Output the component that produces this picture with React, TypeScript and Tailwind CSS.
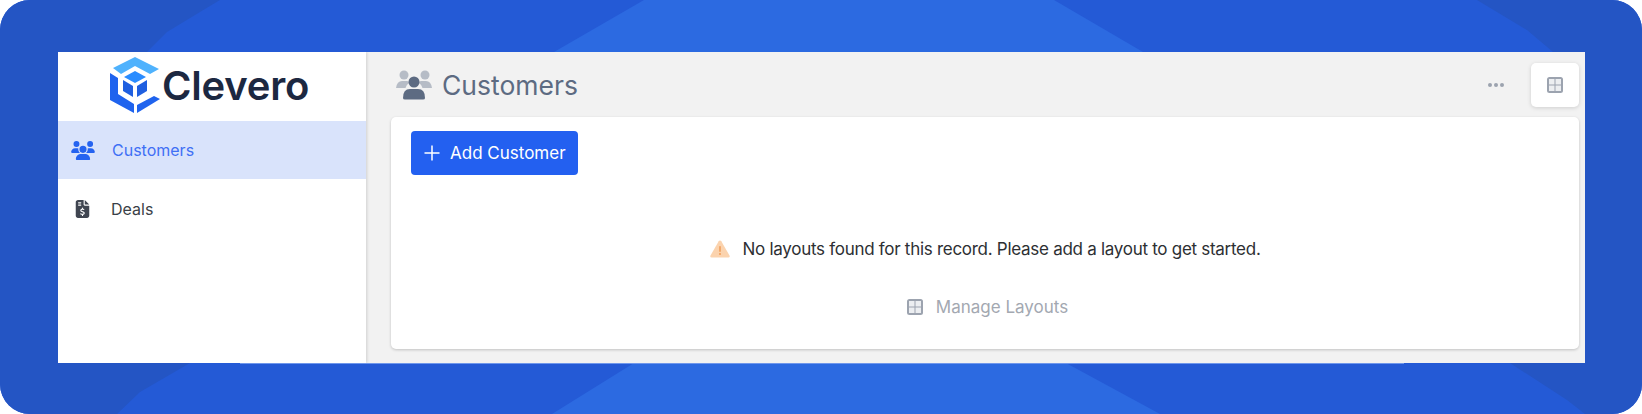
import { FaUsers, FaFileInvoiceDollar } from "react-icons/fa6";

function Backdrop() {
  return (
    <svg className="absolute inset-0" width="1642" height="414" viewBox="0 0 1642 414">
      <polygon points="644,0 1054,0 1143,52 554,52" fill="#2c6ae1" />
      <polygon points="634,363 1066,363 1160,414 552,414" fill="#2c6ae1" />
      <path d="M0 0 H220 L200 12 L167 32 L147 52 H58 V363 H190 L140 392 L117 414 H0 Z" fill="#2455c4" />
      <path d="M1642 0 H1477 L1527 30 L1553 52 H1585 V363 H1510 L1567 400 L1585 414 H1642 Z" fill="#2455c4" />
      <rect x="240" y="363" width="1164" height="1" fill="#6f97ec" />
    </svg>
  );
}

function Logo() {
  return (
    <svg width="54" height="60" viewBox="107 55 54 60" className="shrink-0 mb-[4px]">
      <polygon points="134,57 112,68 120,74 134,66 149,74 158,69" fill="#4fb2fd" />
      <polygon points="109,73 109,100 133,113 133,104 117,94 117,78" fill="#1f63ee" />
      <polygon points="136,113 159,99 153,96 136,105" fill="#1f63ee" />
      <polygon points="134,71 145,77 134,83 123,77" fill="#2a8cff" />
      <polygon points="122,80 132,86 132,97 122,91" fill="#1f5fe0" />
      <polygon points="136,86 146,80 146,91 136,97" fill="#1f5fe0" />
    </svg>
  );
}

function GridIcon({ className }: { className: string }) {
  return (
    <svg viewBox="0 0 18 18" className={className}>
      <rect x="1" y="1" width="16" height="16" rx="2.5" fill="#9ca3af" />
      <rect x="3" y="3" width="5.5" height="5.5" fill="#eceef1" />
      <rect x="9.5" y="3" width="5.5" height="5.5" fill="#eceef1" />
      <rect x="3" y="9.5" width="5.5" height="5.5" fill="#eceef1" />
      <rect x="9.5" y="9.5" width="5.5" height="5.5" fill="#eceef1" />
    </svg>
  );
}

function PeopleDuo() {
  return (
    <svg width="36" height="30" viewBox="0 0 36 30" className="shrink-0">
      <g fill="#b6bcc6">
        <circle cx="8" cy="5" r="4.5" />
        <circle cx="29" cy="5" r="4.5" />
        <path d="M0 18 Q1 11 6 11 H11 Q13 11 13 13 Q10 15 9.5 18 Z" />
        <path d="M36 18 Q35 11 30 11 H25 Q23 11 23 13 Q26 15 26.5 18 Z" />
      </g>
      <g fill="#5d6b82">
        <circle cx="18" cy="12" r="5.5" />
        <path d="M7 28 Q7 19 14 19 H22 Q29 19 29 28 Q29 29.500 27 29.500 H9 Q7 29.500 7 28 Z" />
      </g>
    </svg>
  );
}

function Warning() {
  return (
    <svg width="20" height="18" viewBox="0 0 20 18" className="shrink-0">
      <path d="M10 0.500 Q10.800 0.500 11.300 1.300 L19.500 15.500 Q20.300 17.500 18.300 17.500 H1.700 Q-0.300 17.500 0.500 15.500 L8.700 1.300 Q9.200 0.500 10 0.500 Z" fill="#fbd3ae" />
      <rect x="9.300" y="6" width="1.400" height="6" rx="0.700" fill="#f0974f" />
      <circle cx="10" cy="14" r="0.900" fill="#f0974f" />
    </svg>
  );
}

export default function App() {
  return (
    <div className="w-[1642px] h-[414px] bg-white overflow-hidden font-['Inter',sans-serif]">
      <div className="relative w-[1642px] h-[414px] rounded-[30px] overflow-hidden bg-[#245ad6] pt-[52px] pl-[58px] pr-[57px] pb-[51px]">
        <Backdrop />
        <div className="relative flex h-[311px] bg-[#f2f2f2] overflow-hidden">
          <aside className="w-[308px] shrink-0 bg-white shadow-[1px_0_3px_rgba(0,0,0,0.15)] z-10">
            <div className="h-[69px] flex items-center pl-[50px] gap-0">
              <Logo />
              <span className="text-[40px] leading-none font-semibold text-[#1c2841] tracking-[-0.2px] pb-[2px]">Clevero</span>
            </div>
            <div className="h-[58px] bg-[#d9e3fb] flex items-center pl-[13px] gap-[17px] text-[16px] text-[#3f6ff5]">
              <FaUsers className="w-[24px] h-[19px] text-[#2563f0]" />
              <span className="pb-[1px]">Customers</span>
            </div>
            <div className="h-[60px] flex items-center pl-[17px] gap-[21px] text-[16px] text-[#3a3f47]">
              <FaFileInvoiceDollar className="w-[15px] h-[18px] text-[#3f4550]" />
              <span>Deals</span>
            </div>
          </aside>
          <main className="flex-1 flex flex-col pl-[25px] pr-[6px]">
            <header className="h-[65px] flex items-start">
              <div className="flex items-center gap-[10px] pt-[18px] pl-[5px]">
                <PeopleDuo />
                <span className="text-[26.5px] leading-[30px] text-[#5d6b82]">Customers</span>
              </div>
              <div className="ml-auto flex items-center gap-[26px] pt-[11px]">
                <div className="flex gap-[2px] pr-[1px]">
                  <span className="w-[4px] h-[4px] rounded-full bg-[#9ca3af]" />
                  <span className="w-[4px] h-[4px] rounded-full bg-[#9ca3af]" />
                  <span className="w-[4px] h-[4px] rounded-full bg-[#9ca3af]" />
                </div>
                <button className="w-[48px] h-[44px] bg-white rounded-[5px] shadow-[0_1px_4px_rgba(0,0,0,0.15)] flex items-center justify-center">
                  <GridIcon className="w-[18px] h-[18px]" />
                </button>
              </div>
            </header>
            <section className="h-[232px] bg-white rounded-[5px] shadow-[0_1px_3px_rgba(0,0,0,0.2)] px-[20px] pt-[14px]">
              <button className="w-[167px] h-[44px] bg-[#2360f0] rounded-[4px] flex items-center pl-[13px] gap-[10px] text-white text-[17px]">
                <svg width="16" height="16" viewBox="0 0 16 16" className="shrink-0">
                  <path d="M8 0.500 V15.500 M0.500 8 H15.500" stroke="white" strokeWidth="1.500" fill="none" />
                </svg>
                <span className="pt-[2px]">Add Customer</span>
              </button>
              <div className="flex justify-center items-center gap-[12px] mt-[62px] pl-[1px] text-[17px] tracking-[-0.28px] leading-[24px] text-[#2d2f33]">
                <Warning />
                <span>No layouts found for this record. Please add a layout to get started.</span>
              </div>
              <div className="flex justify-center items-center gap-[12px] mt-[34px] pl-[4px] text-[17px] leading-[24px] text-[#a3a8b1]">
                <GridIcon className="w-[18px] h-[18px]" />
                <span>Manage Layouts</span>
              </div>
            </section>
          </main>
        </div>
      </div>
    </div>
  );
}
